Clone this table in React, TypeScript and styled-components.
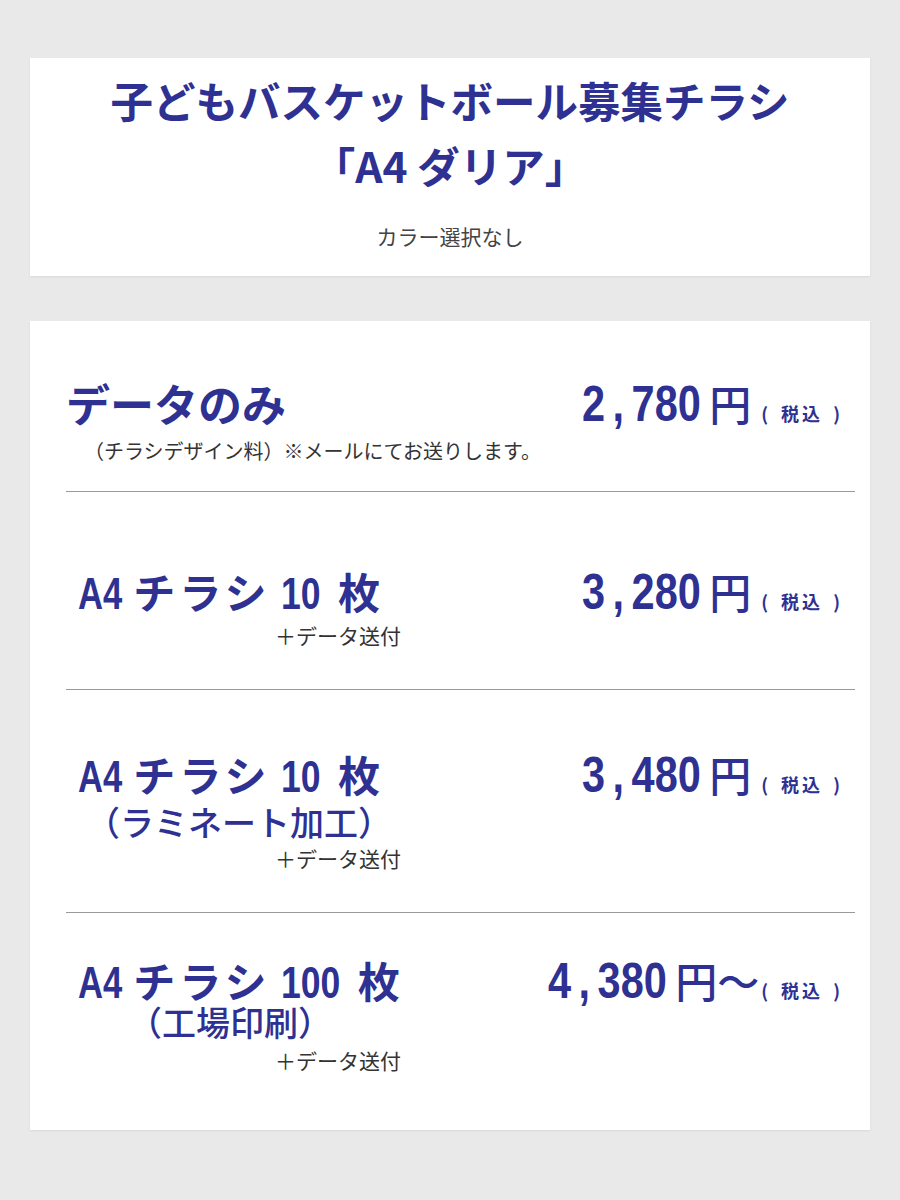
import styled, { createGlobalStyle } from "styled-components";

const BLUE = "#2e3192";
const JP = `"Noto Sans CJK JP", "Noto Sans", sans-serif`;
const LATIN = `"Liberation Sans", Arial, sans-serif`;

// advance widths (em) of Liberation Sans Bold, used to squeeze digits like a condensed face
const ADV: Record<string, number> = { ",": 0.278, A: 0.722, " ": 0.278 };
const adv = (ch: string) => ADV[ch] ?? 0.556;
const naturalWidth = (text: string, size: number, extra = 0) =>
  text.split("").reduce((sum, ch) => sum + adv(ch) * size, 0) + extra;

const GlobalStyle = createGlobalStyle`
  html, body {
    margin: 0;
    padding: 0;
    background: #e9e9e9;
  }
  body {
    font-family: ${JP};
  }
`;

const Page = styled.div`
  padding: 58px 30px 60px;
  display: flex;
  flex-direction: column;
  gap: 45px;
`;

const Card = styled.section`
  background: #fff;
  box-shadow: 0 1px 2px rgba(0, 0, 0, 0.07);
`;

const HeadCard = styled(Card)`
  padding: 9px 0 27px;
  text-align: center;
`;

const Title = styled.h1`
  margin: 0;
  color: ${BLUE};
  font-family: ${JP};
  font-weight: 700;
  font-size: 42.5px;
  line-height: 65px;
`;

const Subtitle = styled.p`
  margin: 26px 0 0;
  color: #444;
  font-size: 21px;
  line-height: 26px;
`;

const ListCard = styled(Card)`
  padding: 0 15px 0 36px;
`;

const Row = styled.div<{ $pt: number; $pb: number; $last?: boolean }>`
  display: flex;
  justify-content: space-between;
  align-items: flex-start;
  padding: ${(p) => p.$pt}px 0 ${(p) => p.$pb}px;
  border-bottom: ${(p) => (p.$last ? "none" : "1px solid #9a9a9a")};
`;

const Left = styled.div`
  display: flex;
  flex-direction: column;
  align-items: flex-start;
`;

const ItemTitle = styled.div`
  height: 52px;
  display: flex;
  align-items: baseline;
  color: ${BLUE};
  white-space: nowrap;
  line-height: 52px;
`;

const PlainName = styled.span`
  font-family: ${JP};
  font-weight: 700;
  font-size: 44px;
`;

const Squeeze = styled.span<{ $size: number; $scale: number; $cut: number; $ml?: number }>`
  display: inline-block;
  font-family: ${LATIN};
  font-weight: 700;
  font-size: ${(p) => p.$size}px;
  transform: scaleX(${(p) => p.$scale});
  transform-origin: 0 50%;
  margin-left: ${(p) => p.$ml ?? 0}px;
  margin-right: ${(p) => -p.$cut}px;
`;

const Kana = styled.span<{ $ml?: number }>`
  font-family: ${JP};
  font-weight: 700;
  font-size: 42px;
  letter-spacing: 4px;
  margin-left: ${(p) => p.$ml ?? 0}px;
`;

const Detail = styled.div<{ $ml: number; $mt: number }>`
  margin: ${(p) => p.$mt}px 0 0 ${(p) => p.$ml}px;
  color: ${BLUE};
  font-family: ${JP};
  font-weight: 500;
  font-size: 34px;
  line-height: 40px;
  white-space: nowrap;
`;

const Note = styled.div<{ $ml: number; $mt: number; $size?: number }>`
  margin: ${(p) => p.$mt}px 0 0 ${(p) => p.$ml}px;
  color: #333;
  font-family: ${JP};
  font-size: ${(p) => p.$size ?? 21}px;
  line-height: 26px;
  white-space: nowrap;
`;

const Price = styled.div`
  height: 52px;
  display: flex;
  align-items: baseline;
  color: ${BLUE};
  line-height: 52px;
  white-space: nowrap;
  padding-right: 12px;
`;

const Comma = styled.span`
  margin: 0 9px;
`;

const Yen = styled.span`
  font-family: ${JP};
  font-weight: 500;
  font-size: 42px;
  margin-left: 8px;
`;

const Tax = styled.span<{ $ml: number }>`
  font-family: ${JP};
  font-weight: 700;
  font-size: 18px;
  letter-spacing: 3px;
  word-spacing: 3px;
  margin-left: ${(p) => p.$ml}px;
`;

function Narrow({ text, size, scale, ml }: { text: string; size: number; scale: number; ml?: number }) {
  const w = naturalWidth(text, size);
  return (
    <Squeeze $size={size} $scale={scale} $cut={w * (1 - scale)} $ml={ml}>
      {text}
    </Squeeze>
  );
}

function PriceTag({ head, tail, from }: { head: string; tail: string; from?: boolean }) {
  const size = 50;
  const scale = 0.83;
  const w = naturalWidth(head + "," + tail, size, 18);
  return (
    <Price>
      <Squeeze $size={size} $scale={scale} $cut={w * (1 - scale)}>
        {head}
        <Comma>,</Comma>
        {tail}
      </Squeeze>
      <Yen>円{from ? "〜" : ""}</Yen>
      <Tax $ml={from ? 2 : 10}>( 税込 )</Tax>
    </Price>
  );
}

function FlyerTitle({ count }: { count: string }) {
  return (
    <ItemTitle>
      <Narrow text="A4" size={45} scale={0.77} ml={12} />
      <Kana $ml={11}>チラシ</Kana>
      <Narrow text={count} size={45} scale={0.79} ml={11} />
      <Kana $ml={17}>枚</Kana>
    </ItemTitle>
  );
}

export default function App() {
  return (
    <>
      <GlobalStyle />
      <Page>
        <HeadCard>
          <Title>
            子どもバスケットボール募集チラシ
            <br />
            「A4 ダリア」
          </Title>
          <Subtitle>カラー選択なし</Subtitle>
        </HeadCard>

        <ListCard>
          <Row $pt={56} $pb={27}>
            <Left>
              <ItemTitle>
                <PlainName>データのみ</PlainName>
              </ItemTitle>
              <Note $ml={18} $mt={9} $size={20}>
                （チラシデザイン料）※メールにてお送りします。
              </Note>
            </Left>
            <PriceTag head="2" tail="780" />
          </Row>

          <Row $pt={73} $pb={41}>
            <Left>
              <FlyerTitle count="10" />
              <Note $ml={209} $mt={5}>
                ＋データ送付
              </Note>
            </Left>
            <PriceTag head="3" tail="280" />
          </Row>

          <Row $pt={58} $pb={41}>
            <Left>
              <FlyerTitle count="10" />
              <Detail $ml={20} $mt={2}>
                （ラミネート加工）
              </Detail>
              <Note $ml={209} $mt={3}>
                ＋データ送付
              </Note>
            </Left>
            <PriceTag head="3" tail="480" />
          </Row>

          <Row $pt={41} $pb={57} $last>
            <Left>
              <FlyerTitle count="100" />
              <Detail $ml={62} $mt={-4}>
                （工場印刷）
              </Detail>
              <Note $ml={209} $mt={5}>
                ＋データ送付
              </Note>
            </Left>
            <PriceTag head="4" tail="380" from />
          </Row>
        </ListCard>
      </Page>
    </>
  );
}
